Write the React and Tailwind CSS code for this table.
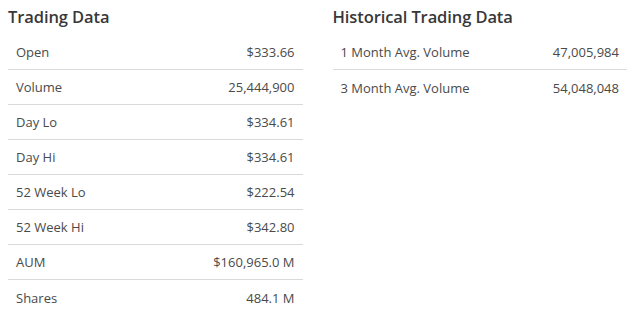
import React from 'react';

const trading = [
  ['Open', '$333.66'],
  ['Volume', '25,444,900'],
  ['Day Lo', '$334.61'],
  ['Day Hi', '$334.61'],
  ['52 Week Lo', '$222.54'],
  ['52 Week Hi', '$342.80'],
  ['AUM', '$160,965.0 M'],
  ['Shares', '484.1 M'],
];

const historical = [
  ['1 Month Avg. Volume', '47,005,984'],
  ['3 Month Avg. Volume', '54,048,048'],
];

const DataTable = ({ title, rows }) => (
  <div>
    <h2 className="h-[35px] flex items-center text-[16.5px] font-semibold tracking-[-0.1px] text-[#383838]">{title}</h2>
    <div>
      {rows.map(([label, value], i) => (
        <div
          key={label}
          className={`h-[35px] flex items-center justify-between px-2 pt-[2px] text-[13px] text-[#4a4a4a] ${
            i < rows.length - 1 ? 'border-b border-[#d9d9d9]' : ''
          }`}
        >
          <span>{label}</span>
          <span>{value}</span>
        </div>
      ))}
    </div>
  </div>
);

const App = () => {
  return (
    <div className="w-[629px] h-[312px] bg-white pl-2 pr-[2px] grid grid-cols-2 gap-[30px] font-['Open_Sans',sans-serif]">
      <DataTable title="Trading Data" rows={trading} />
      <DataTable title="Historical Trading Data" rows={historical} />
    </div>
  );
};

export default App;
